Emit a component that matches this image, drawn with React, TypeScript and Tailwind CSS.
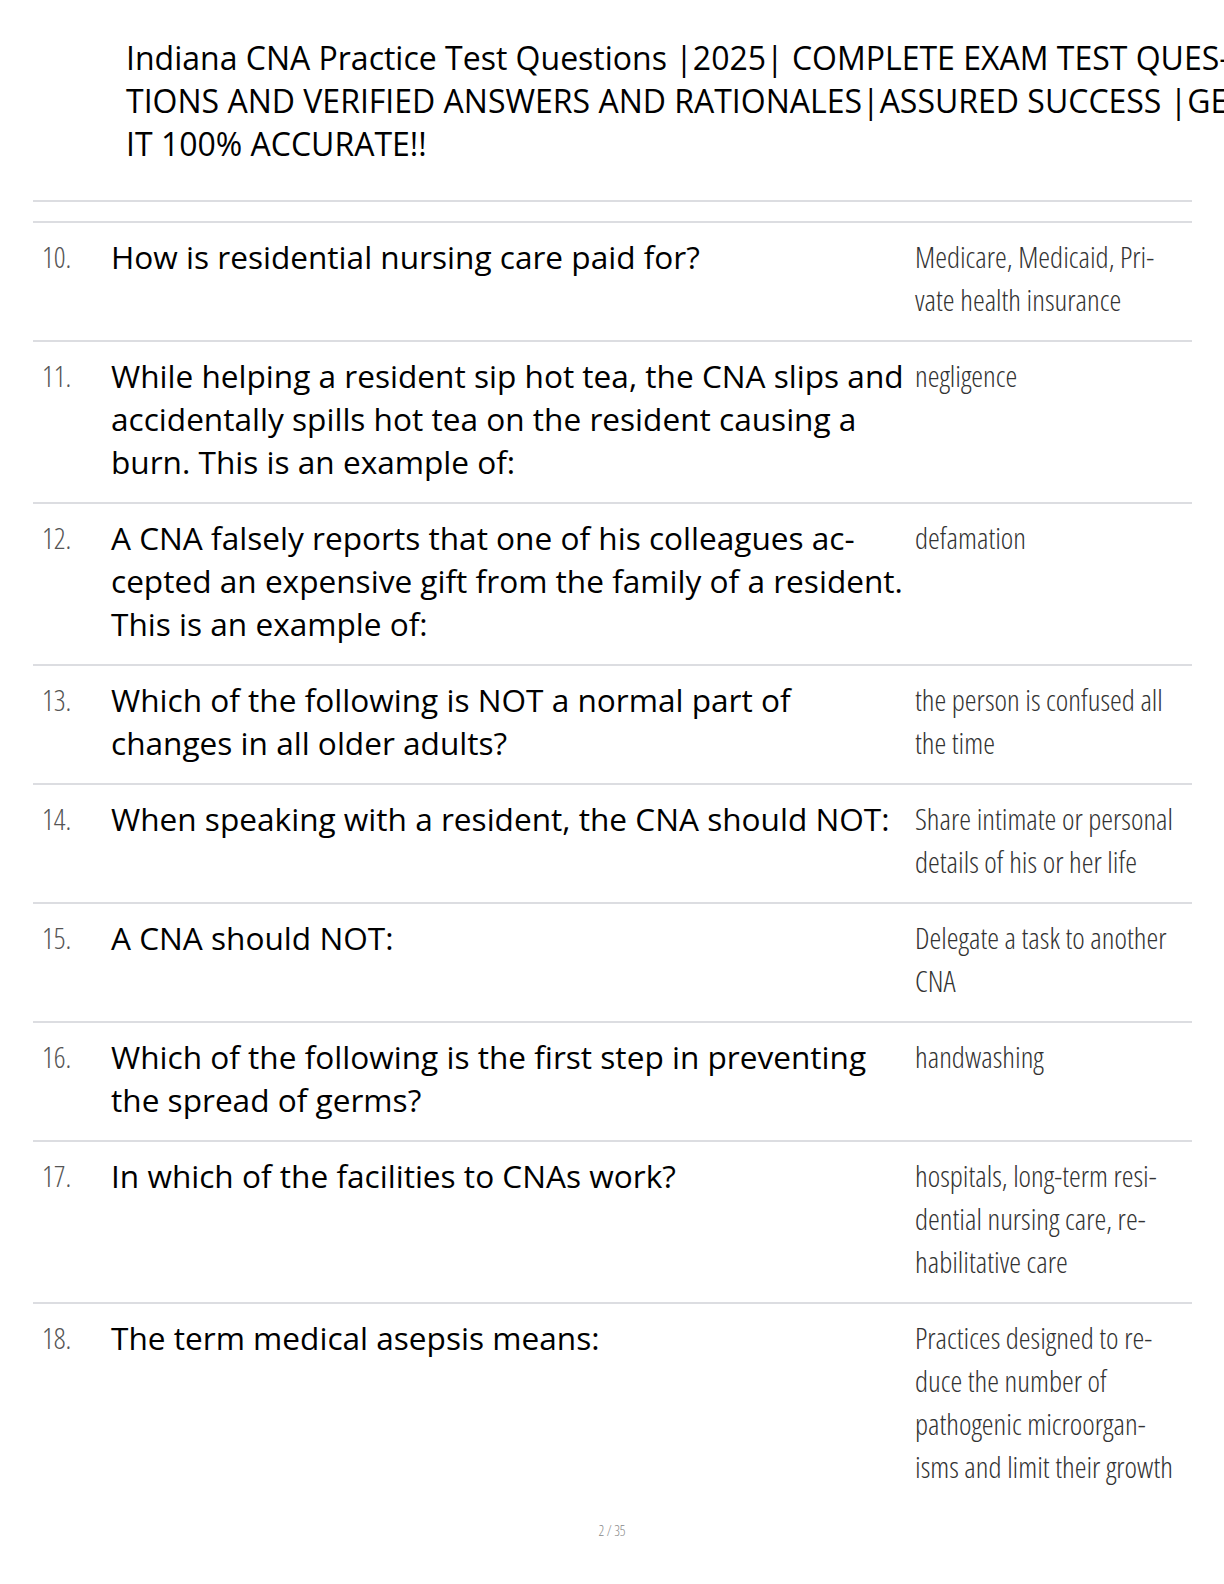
const rows: { n: string; q: string[]; a: string[] }[] = [
  {
    n: '10.',
    q: ['How is residential nursing care paid for?'],
    a: ['Medicare, Medicaid, Pri-', 'vate health insurance'],
  },
  {
    n: '11.',
    q: [
      'While helping a resident sip hot tea, the CNA slips and',
      'accidentally spills hot tea on the resident causing a',
      'burn. This is an example of:',
    ],
    a: ['negligence'],
  },
  {
    n: '12.',
    q: [
      'A CNA falsely reports that one of his colleagues ac-',
      'cepted an expensive gift from the family of a resident.',
      'This is an example of:',
    ],
    a: ['defamation'],
  },
  {
    n: '13.',
    q: ['Which of the following is NOT a normal part of', 'changes in all older adults?'],
    a: ['the person is confused all', 'the time'],
  },
  {
    n: '14.',
    q: ['When speaking with a resident, the CNA should NOT:'],
    a: ['Share intimate or personal', 'details of his or her life'],
  },
  {
    n: '15.',
    q: ['A CNA should NOT:'],
    a: ['Delegate a task to another', 'CNA'],
  },
  {
    n: '16.',
    q: ['Which of the following is the first step in preventing', 'the spread of germs?'],
    a: ['handwashing'],
  },
  {
    n: '17.',
    q: ['In which of the facilities to CNAs work?'],
    a: ['hospitals, long-term resi-', 'dential nursing care, re-', 'habilitative care'],
  },
  {
    n: '18.',
    q: ['The term medical asepsis means:'],
    a: [
      'Practices designed to re-',
      'duce the number of',
      'pathogenic microorgan-',
      'isms and limit their growth',
    ],
  },
];

const condensed = "font-['Open_Sans','Noto_Sans',sans-serif] font-light [font-stretch:75%]";

export default function App() {
  return (
    <div className="w-[1224px] h-[1584px] overflow-hidden bg-white relative">
      {/* title runs past the page edge, as in the source document */}
      <div className="pt-[36px] pl-[126px] font-['Open_Sans','Noto_Sans',sans-serif] text-[32px] leading-[43px] text-black whitespace-nowrap">
        <p>Indiana CNA Practice Test Questions |2025| COMPLETE EXAM TEST QUES-</p>
        <p>TIONS AND VERIFIED ANSWERS AND RATIONALES|ASSURED SUCCESS |GET</p>
        <p>IT 100% ACCURATE!!</p>
      </div>

      <div className="mx-[33px] mt-[35px] w-[1159px]">
        <div className="h-[2px] bg-[#dcdde1]" />
        <div className="h-[19px]" />
        <div className="h-[2px] bg-[#dcdde1]" />
        {rows.map((r, i) => (
          <div
            key={r.n}
            className={`flex pt-[12px] pb-[19px] ${
              i < rows.length - 1 ? 'border-b-2 border-[#dcdde1]' : ''
            }`}
          >
            <div className={`w-[78px] pl-[9px] text-[29px] leading-[43px] text-[#555] ${condensed}`}>
              {r.n}
            </div>
            <div className="w-[804px] font-['Open_Sans','Noto_Sans',sans-serif] font-medium text-[31.6px] leading-[43px] text-black whitespace-nowrap">
              {r.q.map((l) => (
                <p key={l}>{l}</p>
              ))}
            </div>
            <div className={`flex-1 text-[29.8px] leading-[43px] text-[#333] whitespace-nowrap ${condensed}`}>
              {r.a.map((l) => (
                <p key={l}>{l}</p>
              ))}
            </div>
          </div>
        ))}
      </div>

      <p className={`absolute left-0 right-0 top-[1520px] text-center text-[14px] text-[#888] ${condensed}`}>
        2 / 35
      </p>
    </div>
  );
}
